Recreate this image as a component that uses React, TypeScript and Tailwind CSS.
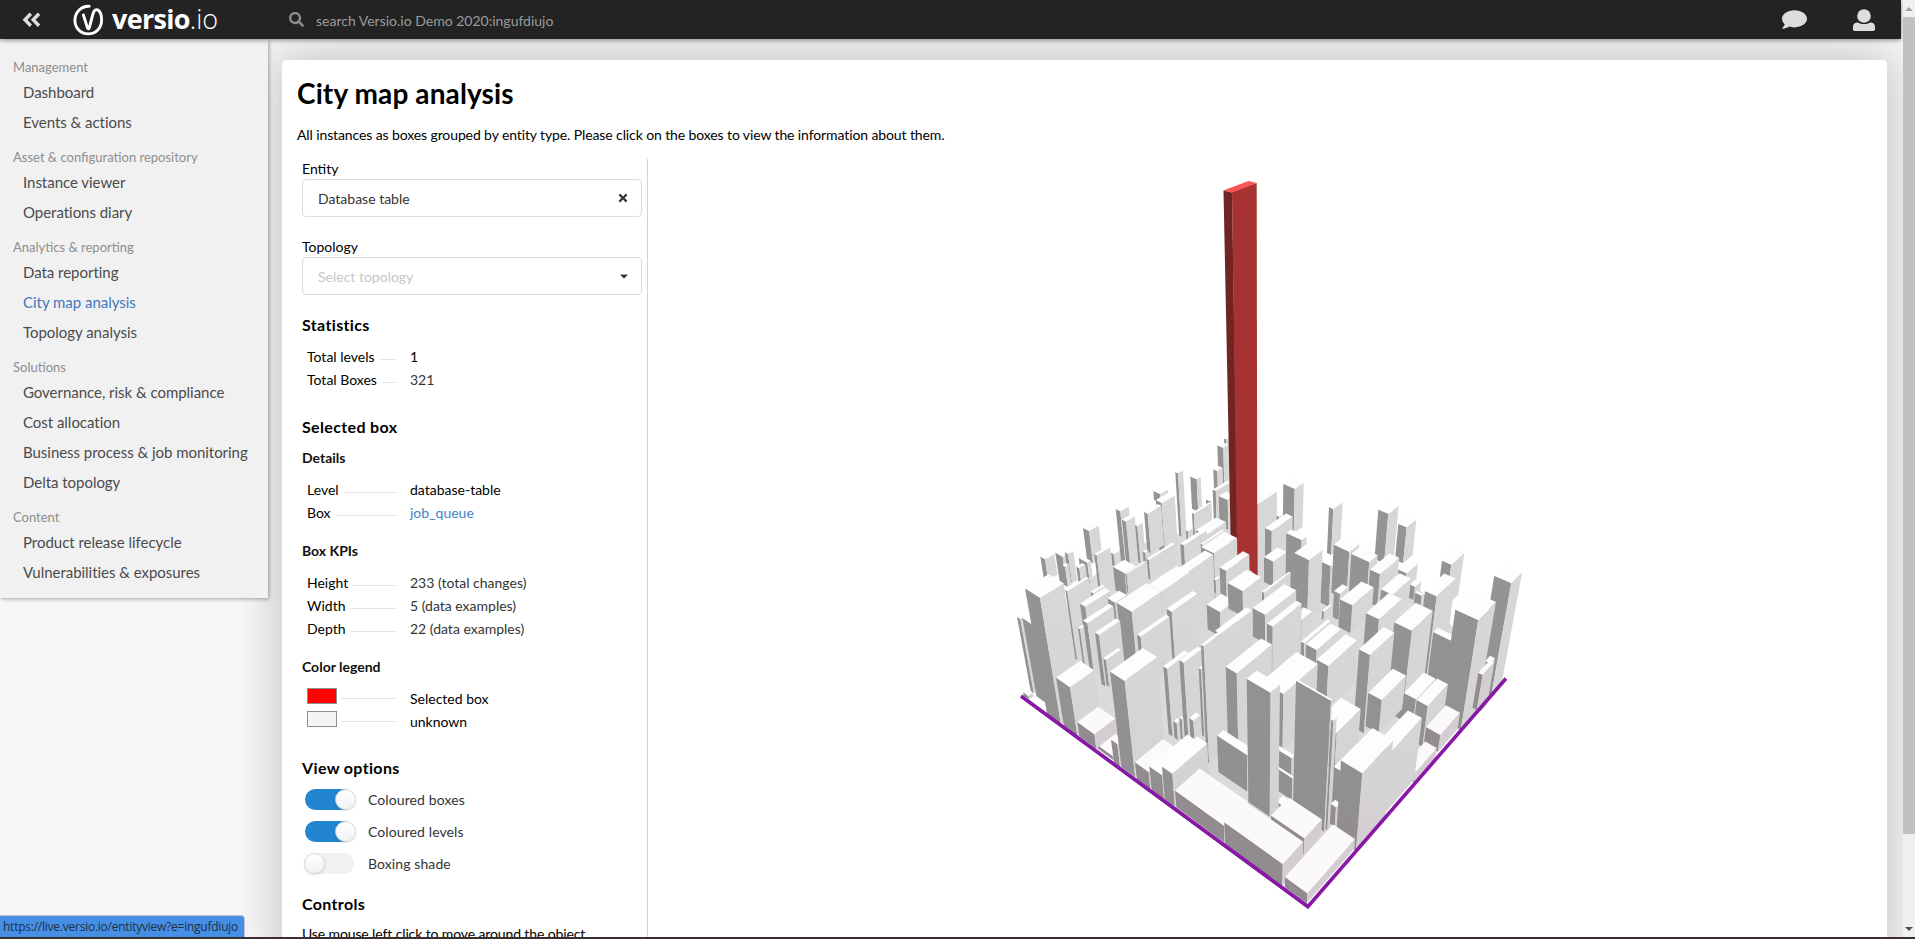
import React from "react";
import { FaSearch, FaComment, FaTimes, FaCaretDown } from "react-icons/fa";

/* ---------- city map ---------- */

// One box: front corner x, front corner y, left corner x, right corner x, foot y
type Box = [number, number, number, number, number];
type Pt = [number, number];
type Block = { ox: number; oy: number; low?: boolean; boxes: Box[] };

const VL: Pt = [-35, -80];
const VR: Pt = [2160, -80];
const VD: Pt = [1265, 1960];

const atX = (p: Pt, v: Pt, x: number): Pt => [x, p[1] + ((v[1] - p[1]) * (x - p[0])) / (v[0] - p[0])];
const atT = (p: Pt, t: number): Pt => [p[0] + (VD[0] - p[0]) * t, p[1] + (VD[1] - p[1]) * t];
const cross = (a: Pt, b: Pt, c: Pt, d: Pt): Pt => {
  const den = (a[0] - b[0]) * (c[1] - d[1]) - (a[1] - b[1]) * (c[0] - d[0]);
  const m = a[0] * b[1] - a[1] * b[0];
  const n = c[0] * d[1] - c[1] * d[0];
  return [(m * (c[0] - d[0]) - (a[0] - b[0]) * n) / den, (m * (c[1] - d[1]) - (a[1] - b[1]) * n) / den];
};
const pts = (...p: Pt[]) => p.map((q) => q[0].toFixed(1) + "," + q[1].toFixed(1)).join(" ");

const back: Block[] = [
  {
    ox: 1000,
    oy: 420,
    boxes: [
      [678, 58, 672, 688, 180], [670, 83, 652, 686, 200], [652, 153, 640, 668, 260],
      [534, 160, 526, 549, 350], [590, 178, 571, 602, 275], [480, 222, 460, 503, 250],
      [647, 213, 638, 692, 300], [683, 240, 656, 705, 330],
      [361, 274, 347, 386, 430], [267, 333, 249, 296, 430], [378, 305, 366, 404, 430], [412, 318, 405, 428, 430],
      [485, 249, 467, 524, 400], [443, 281, 432, 484, 400],
      [630, 244, 618, 634, 300], [582, 281, 576, 633, 350], [564, 334, 558, 576, 360],
      [618, 345, 588, 678, 400], [552, 376, 541, 620, 450],
      [135, 418, 121, 163, 480], [188, 410, 166, 196, 500], [204, 402, 194, 220, 490], [195, 440, 187, 206, 500],
      [262, 428, 236, 272, 490], [238, 445, 229, 256, 490], [290, 406, 283, 331, 520], [341, 402, 333, 350, 440],
      [436, 398, 428, 445, 440], [773, 252, 760, 831, 500],
    ],
  },
];

const front: Block[] = [
  {
    ox: 1000,
    oy: 420,
    boxes: [
      [608, 374, 602, 672, 420], [642, 400, 604, 711, 600],
      [374, 460, 339, 408, 530], [447, 420, 440, 524, 480], [380, 462, 376, 438, 520],
      [560, 458, 535, 640, 650], [484, 515, 446, 568, 640],
      [202, 513, 196, 266, 720], [280, 520, 272, 315, 720], [256, 560, 240, 330, 720],
      [61, 597, 51, 68, 820], [98, 614, 67, 104, 850],
      [345, 548, 323, 380, 700], [240, 627, 234, 255, 740], [262, 610, 249, 340, 760],
      [395, 575, 350, 484, 800], [297, 645, 285, 360, 800], [318, 720, 310, 362, 800],
      [515, 575, 500, 592, 740], [422, 650, 411, 508, 800],
      [120, 533, 75, 191, 912],
    ],
  },
  {
    ox: 1260,
    oy: 420,
    boxes: [
      [58, 290, 50, 66, 310], [104, 206, 70, 131, 340], [220, 267, 207, 248, 405], [385, 281, 355, 416, 430], [440, 322, 415, 469, 430],
      [574, 434, 546, 613, 560], [754, 489, 703, 787, 830],
      [35, 333, 15, 98, 440], [40, 425, 12, 80, 500], [125, 360, 79, 140, 520], [212, 438, 186, 217, 560],
      [147, 420, 103, 188, 600], [268, 395, 221, 298, 540], [328, 426, 274, 353, 560],
      [440, 460, 415, 474, 520], [465, 500, 450, 484, 540], [360, 462, 330, 418, 560], [398, 524, 363, 453, 580],
      [485, 527, 465, 490, 720], [395, 640, 370, 440, 720], [530, 529, 495, 587, 800],
      [240, 522, 222, 265, 600], [192, 575, 186, 215, 600], [277, 556, 240, 341, 640], [357, 598, 318, 425, 700],
      [455, 632, 403, 518, 900], [583, 667, 520, 596, 900], [691, 730, 676, 705, 870], [655, 600, 586, 708, 930],
    ],
  },
  {
    ox: 1120,
    oy: 530,
    boxes: [
      [432, 188, 426, 512, 260], [300, 246, 260, 345, 320], [287, 150, 281, 300, 190], [318, 122, 299, 388, 200], [368, 183, 323, 424, 260],
      [545, 270, 520, 576, 330], [435, 254, 398, 529, 340], [458, 290, 441, 545, 430],
      [553, 340, 543, 632, 410], [590, 360, 558, 663, 410],
      [625, 408, 590, 711, 540], [750, 375, 717, 823, 610],
      [360, 345, 352, 388, 380], [302, 312, 285, 396, 420],
      [142, 416, 130, 205, 620], [191, 398, 178, 245, 640], [243, 418, 236, 250, 620],
      [170, 580, 160, 182, 630], [185, 568, 178, 190, 630], [220, 572, 208, 240, 630], [251, 349, 243, 351, 700],
      [350, 430, 317, 456, 640], [490, 492, 425, 593, 660],
      [381, 675, 291, 400, 785], [515, 685, 470, 524, 745], [517, 745, 470, 522, 810], [492, 830, 470, 510, 840],
      [650, 608, 590, 722, 720], [785, 510, 747, 855, 600],
      [451, 488, 380, 480, 860], [633, 512, 528, 637, 905], [640, 572, 634, 650, 900],
    ],
  },
  {
    ox: 1000,
    oy: 660,
    low: true,
    boxes: [[85, 108, 69, 98, 118], [283, 223, 232, 345, 266], [338, 288, 290, 385, 300], [352, 252, 333, 358, 320]],
  },
  { ox: 1000, oy: 660, boxes: [[210, 82, 168, 283, 230], [374, 63, 330, 472, 352]] },
  { ox: 1000, oy: 660, low: true, boxes: [[283, 223, 232, 345, 266], [446, 336, 405, 530, 388]] },
  { ox: 1000, oy: 660, boxes: [[486, 346, 448, 600, 418], [517, 341, 486, 622, 440]] },
  { ox: 1000, oy: 660, low: true, boxes: [[672, 497, 525, 745, 548]] },
  {
    ox: 1260,
    oy: 660,
    boxes: [
      [365, 120, 325, 438, 220], [468, 118, 432, 527, 250], [503, 138, 470, 564, 260],
    ],
  },
  { ox: 1260, oy: 660, low: true, boxes: [[668, 45, 655, 703, 150], [541, 225, 498, 600, 275], [465, 338, 430, 530, 366]] },
  { ox: 1260, oy: 660, boxes: [[262, 345, 222, 330, 450], [393, 275, 350, 486, 460], [228, 442, 213, 240, 500], [307, 340, 243, 400, 572]] },
  { ox: 1260, oy: 660, low: true, boxes: [[133, 535, 33, 186, 585], [68, 612, -107, 130, 677], [142, 700, 75, 285, 730]] },
];

function Blocks({ blocks }: { blocks: Block[] }) {
  return (
    <>
      {blocks.map((g, i) =>
        g.boxes.map((b, j) => {
          const f: Pt = [g.ox + b[0] / 3, g.oy + b[1] / 3];
          const l = atX(f, VL, g.ox + b[2] / 3);
          const r = atX(f, VR, g.ox + b[3] / 3);
          const k = cross(l, VR, r, VL);
          const t = (g.oy + b[4] / 3 - f[1]) / (VD[1] - f[1]);
          // the far feet sit slightly higher, following the ground perspective
          const foot = atT(f, t);
          const lf = cross(l, VD, foot, VL);
          const rf = cross(r, VD, foot, VR);
          return (
            <g key={i + "-" + j}>
              <polygon points={pts(f, l, lf, foot)} fill={g.low ? "#918c90" : "url(#dark)"} />
              <polygon points={pts(f, r, rf, foot)} fill={g.low ? "#d4ced3" : "url(#light)"} />
              <polygon points={pts(f, l, k, r)} fill={g.low ? "#fcf9fd" : "#fdfdfd"} />
            </g>
          );
        }),
      )}
    </>
  );
}

function CityMap() {
  return (
    <svg className="block h-[779px] w-[1239px]" viewBox="648 159 1239 779" aria-hidden="true">
      <defs>
        <linearGradient id="dark" gradientUnits="userSpaceOnUse" x1="0" y1="600" x2="0" y2="860">
          <stop offset="0" stopColor="#949494" />
          <stop offset="0.6" stopColor="#929192" />
          <stop offset="1" stopColor="#918c90" />
        </linearGradient>
        <linearGradient id="light" gradientUnits="userSpaceOnUse" x1="0" y1="600" x2="0" y2="860">
          <stop offset="0" stopColor="#d7d7d7" />
          <stop offset="0.6" stopColor="#d5d4d5" />
          <stop offset="1" stopColor="#d3cdd2" />
        </linearGradient>
      </defs>
      <polygon points="1036,690 1308,900 1496,676 1420,590 1300,560 1230,520 1120,550 1070,600" fill="#dadada" />
      <Blocks blocks={back} />
      <polygon points="1223.5,190.5 1232,192.5 1238,557 1231,557" fill="#702424" />
      <polygon points="1232,192 1256.7,183 1257.3,576 1237,560" fill="#a63232" />
      <polygon points="1223.2,190.5 1248.5,181 1256.8,183 1232,192.6" fill="#fb5454" />
      <Blocks blocks={front} />
      <path d="M1022 697.5 1308.5 908" stroke="#4d1560" strokeWidth="2" />
      <path d="M1021 696 1308 906.5 1506 678.5" fill="none" stroke="#8a18a6" strokeWidth="3.6" />
    </svg>
  );
}

/* ---------- shell ---------- */

const nav = [
  { title: "Management", items: ["Dashboard", "Events & actions"] },
  { title: "Asset & configuration repository", items: ["Instance viewer", "Operations diary"] },
  { title: "Analytics & reporting", items: ["Data reporting", "City map analysis", "Topology analysis"] },
  {
    title: "Solutions",
    items: ["Governance, risk & compliance", "Cost allocation", "Business process & job monitoring", "Delta topology"],
  },
  { title: "Content", items: ["Product release lifecycle", "Vulnerabilities & exposures"] },
];

function TopBar() {
  return (
    <header className="relative z-20 flex h-[39px] w-[1901px] shrink-0 items-center bg-[#232323] shadow-[0_1px_5px_rgba(0,0,0,0.45)]">
      <svg className="ml-[22px] h-[16px] w-[19px]" viewBox="0 0 19 16" fill="none" stroke="#dcdddd" strokeWidth="3.4">
        <path d="M8.800 1.800 3 7.800l5.800 6M17 1.800l-5.800 6 5.800 6" />
      </svg>
      <svg className="ml-[32px] h-[32px] w-[31px]" viewBox="0 0 31 32" fill="none" stroke="#fff">
        <path
          d="M16.200 2.200C8 2 1.900 8.400 1.900 16.200c0 7.800 5.800 13.700 13.200 13.700 7.800 0 13.500-6 13.500-13.700 0-5-1.400-9-4-10.300-2.700-1.200-3.900 1.500-4.800 4.600l-3.300 12.600c-.6 2.300-1.500 2.400-2.200.3L10.400 11"
          strokeWidth="2.900"
          strokeLinecap="round"
        />
      </svg>
      <div className="ml-[8px] flex w-[110px] pb-[1px] font-['Open_Sans',sans-serif] text-[27px] leading-[38px] text-white">
        <span className="font-bold tracking-[-0.7px]">versio</span>
        <span className="font-light">.io</span>
      </div>
      <FaSearch className="ml-[67px] h-[15px] w-[15px] text-[#8d8d8d]" />
      <span className="ml-[12px] pt-[1px] text-[14px] text-[#9b9b9b]">search Versio.io Demo 2020:ingufdiujo</span>
      <FaComment className="mr-px ml-auto h-[21px] w-[25px] text-[#dcdddd]" preserveAspectRatio="none" />
      <svg className="mr-[26px] ml-[45px] h-[22px] w-[22px]" viewBox="0 0 22 22" fill="#dcdddd">
        <circle cx="11" cy="7" r="6.800" />
        <path d="M0 20v-2.500C0 14.800 2 13.800 5 13.600c3 2 9 2 12 0 3 .2 5 1.200 5 3.900V20c0 1.200-.6 2-1.800 2H1.800C.6 22 0 21.200 0 20z" />
      </svg>
    </header>
  );
}

function Sidebar() {
  return (
    <nav className="relative z-10 h-[559px] w-[268px] shrink-0 bg-[#f1f1f1] pt-[9px] shadow-[1px_1px_4px_rgba(0,0,0,0.35)]">
      {nav.map((s) => (
        <section key={s.title}>
          <h2 className="h-[30px] pt-[9px] pl-[13px] text-[13px] leading-[20px] text-[#8e8e8e]">{s.title}</h2>
          {s.items.map((t) => (
            <a
              key={t}
              className={
                "block h-[30px] pl-[23px] text-[15px] leading-[29px] tracking-[-0.03px] " +
                (t === "City map analysis" ? "text-[#4178be]" : "text-[#4b4b4b]")
              }
            >
              {t}
            </a>
          ))}
        </section>
      ))}
    </nav>
  );
}

function Row({ label, value, link, soft }: { label: string; value: string; link?: boolean; soft?: boolean }) {
  return (
    <div className="flex h-[23px] pl-[5px] text-[14px] leading-[23px]">
      <div className="flex w-[89px] gap-[5px]">
        <span>{label}</span>
        <i className="mt-[14px] h-px flex-1 bg-[#e2e2e2]" />
      </div>
      <span className={"ml-[14px] " + (link ? "text-[#4183c4]" : soft ? "text-[#333]" : "text-black")}>{value}</span>
    </div>
  );
}

function Swatch({ color, label }: { color: string; label: string }) {
  return (
    <div className="flex h-[23px] pl-[5px] text-[14px]">
      <div className="flex w-[89px] gap-[4px]">
        <i className={"h-[16px] w-[30px] border border-[#8e8e8e] " + color} />
        <i className="mt-[10px] h-px flex-1 bg-[#e2e2e2]" />
      </div>
      <span className="ml-[14px] leading-[22px]">{label}</span>
    </div>
  );
}

function Toggle({ on, label }: { on?: boolean; label: string }) {
  return (
    <div className="flex h-[32px] items-center pl-[3px] text-[14px]">
      <span className={"flex h-[21px] w-[49px] rounded-full " + (on ? "justify-end bg-[#2185d0]" : "bg-[#f1f1f1]")}>
        <i
          className={
            "h-[21px] w-[21px] rounded-full border border-[#d8d8d8] bg-linear-to-b from-white to-[#f2f2f2] shadow-[0_1px_2px_rgba(34,36,38,0.15)] " +
            (on ? "-mr-[2px]" : "-ml-[1px]")
          }
        />
      </span>
      <span className="ml-[14px] tracking-[0.1px] text-[#333]">{label}</span>
    </div>
  );
}

const h3 = "h-[24px] text-[16px] font-bold leading-[24px] tracking-[0.35px] text-black";
const h4 = "h-[20px] text-[14px] font-bold leading-[20px] text-[#111]";
const field =
  "flex h-[38px] w-[340px] items-center justify-between rounded-[4px] border border-[#dcdcdd] bg-white pr-[12px] pl-[15px] text-[14px]";

function Panel() {
  return (
    <aside className="h-[778px] w-[351px] shrink-0 overflow-hidden border-r border-[#d4d4d5] pl-[5px] text-black">
      <div className="h-[20px] text-[14px] leading-[20px]">Entity</div>
      <div className={field}>
        <span className="text-[#333]">Database table</span>
        <FaTimes className="h-[12px] w-[12px] text-[#333]" />
      </div>
      <div className="mt-[20px] h-[20px] text-[14px] leading-[20px]">Topology</div>
      <div className={field}>
        <span className="text-[#c7c7c7]">Select topology</span>
        <FaCaretDown className="h-[12px] w-[10px] text-[#333]" />
      </div>
      <div className={h3 + " mt-[18px]"}>Statistics</div>
      <div className="mt-[8px]">
        <Row label="Total levels" value="1" />
        <Row label="Total Boxes" value="321" soft />
      </div>
      <div className={h3 + " mt-[24px]"}>Selected box</div>
      <div className={h4 + " mt-[9px]"}>Details</div>
      <div className="mt-[10px]">
        <Row label="Level" value="database-table" />
        <Row label="Box" value="job_queue" link />
      </div>
      <div className={h4 + " mt-[17px]"}>Box KPIs</div>
      <div className="mt-[10px]">
        <Row label="Height" value="233 (total changes)" soft />
        <Row label="Width" value="5 (data examples)" soft />
        <Row label="Depth" value="22 (data examples)" soft />
      </div>
      <div className={h4 + " mt-[17px]"}>Color legend</div>
      <div className="mt-[11px]">
        <Swatch color="bg-[#ff0000]" label="Selected box" />
        <Swatch color="bg-[#f5f5f5]" label="unknown" />
      </div>
      <div className={h3 + " mt-[22px]"}>View options</div>
      <div className="mt-[3px]">
        <Toggle on label="Coloured boxes" />
        <Toggle on label="Coloured levels" />
        <Toggle label="Boxing shade" />
      </div>
      <div className={h3 + " mt-[13px]"}>Controls</div>
      <div className="mt-[8px] text-[14px] leading-[20px] tracking-[-0.12px]">Use mouse left click to move around the object.</div>
    </aside>
  );
}

export default function App() {
  return (
    <div className="relative flex h-[939px] w-[1915px] flex-col overflow-hidden bg-[#f8f6f7] font-['Lato',sans-serif]">
      <div className="flex h-[937px]">
        <div className="flex w-[1903px] flex-col overflow-hidden">
          <TopBar />
          <div className="flex min-h-0 flex-1">
            <Sidebar />
            <main className="mt-[21px] ml-[14px] h-[900px] w-[1605px] shrink-0 rounded-[4px] bg-white pt-[13px] pl-[15px] shadow-[0_0_46px_6px_rgba(0,0,0,0.2)]">
              <h1 className="h-[40px] text-[28px] font-bold leading-[40px] tracking-[0.12px] text-black">City map analysis</h1>
              <p className="mt-[12px] h-[20px] text-[14px] leading-[20px] tracking-[-0.11px] text-black">
                All instances as boxes grouped by entity type. Please click on the boxes to view the information about them.
              </p>
              <div className="mt-[14px] flex">
                <Panel />
                <CityMap />
              </div>
            </main>
          </div>
        </div>
        <div className="flex w-[12px] flex-col items-center justify-between bg-[#f0f0f0] pb-[6px]">
          <svg className="mt-[7px] h-[4px] w-[8px]" viewBox="0 0 8 4" fill="#a3a3a3">
            <path d="M4 0l4 4H0z" />
          </svg>
          <div className="mt-[6px] h-[817px] w-[12px] bg-[#c1c1c1]" />
          <svg className="mt-auto h-[4px] w-[8px]" viewBox="0 0 8 4" fill="#505050">
            <path d="M4 4l4-4H0z" />
          </svg>
        </div>
      </div>
      <div className="h-[2px] bg-[#3a2e2e]" />
      <div className="absolute bottom-[2px] left-0 z-30 h-[22px] w-[245px] whitespace-nowrap rounded-tr-[4px] border-t border-r border-[#bcc4d0] bg-[#468fe6] pl-[3px] font-['Open_Sans',sans-serif] text-[12px] leading-[21px] tracking-[-0.24px] text-[#22303f]">
        https://live.versio.io/entityview?e=ingufdiujo
      </div>
    </div>
  );
}
